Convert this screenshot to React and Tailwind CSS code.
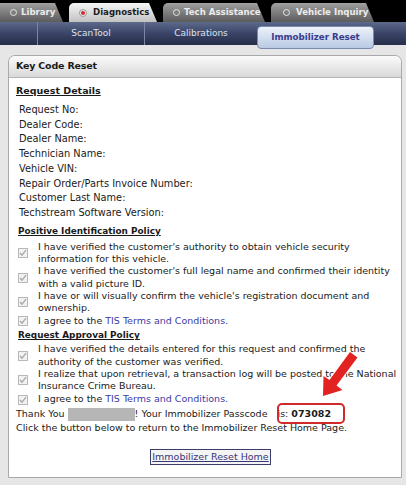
import React from "react";

function Tab({ label, active, className }) {
  return (
    <div
      className={
        "h-[19px] rounded-tl-[5px] flex items-center gap-[4px] whitespace-nowrap text-[8.6px] font-bold [clip-path:polygon(0_0,calc(100%-8px)_0,100%_100%,0_100%)] " +
        (active
          ? "bg-gradient-to-b from-[#f6f6f6] to-[#c2c2c2] text-[#1e1e1e]"
          : "bg-gradient-to-b from-[#a0a0a0] to-[#5c5c5c] text-[#ececec]") +
        " " +
        className
      }
    >
      {active ? (
        <span className="w-[8px] h-[8px] rounded-full bg-[#ececec] border border-[#9a9a9a] flex items-center justify-center">
          <span className="w-[4px] h-[4px] rounded-full bg-[#d42a2a]" />
        </span>
      ) : (
        <span className="w-[7px] h-[7px] rounded-full border-[1.5px] border-[#e4e4e4]" />
      )}
      <span>{label}</span>
    </div>
  );
}

function Check() {
  return (
    <span className="w-[10px] h-[10px] border border-[#b8b8b8] bg-[#f2f2f2] flex items-center justify-center shrink-0">
      <svg width="8" height="8" viewBox="0 0 8 8">
        <path d="M1 4 L3 6.2 L7 1.2" fill="none" stroke="#a8a8a8" strokeWidth="1.3" />
      </svg>
    </span>
  );
}

function Item({ children, single }) {
  return (
    <div className={"flex items-center " + (single ? "h-[14px]" : "")}>
      <div className="w-[20px] flex">
        <Check />
      </div>
      <div className="leading-[12.3px]">{children}</div>
    </div>
  );
}

const Link = ({ children }) => <span className="text-[#3a3aa8]">{children}</span>;

export default function App() {
  return (
    <div className="w-[406px] h-[485px] overflow-hidden bg-[#d6d6d6] relative font-['DejaVu_Sans',Verdana,sans-serif] text-[#1a1a1a]">
      {/* top tabs */}
      <div className="h-[22px] bg-black flex items-end gap-[6px] ml-[-10px]">
        <Tab label="Library" className="w-[73px] pl-[20px]" />
        <Tab label="Diagnostics" active className="w-[88px] pl-[10px] gap-[6px]" />
        <Tab label="Tech Assistance" className="w-[102px] pl-[10px]" />
        <Tab label="Vehicle Inquiry" className="w-[103px] pl-[12px] gap-[6px]" />
      </div>
      {/* sub nav */}
      <div className="h-[23px] bg-gradient-to-b from-[#5d6a8c] via-[#3a4466] to-[#262e48] flex items-stretch text-[9px] text-[#dfe3ee]">
        <div className="w-[38px] border-r border-[#7d87a3]" />
        <div className="w-[107px] border-r border-[#7d87a3] flex items-center justify-center">ScanTool</div>
        <div className="w-[112px] flex items-center justify-center">Calibrations</div>
        <div className="relative z-10 mt-[4px] h-[23px] w-[117px] rounded-[4px] border border-[#7a8bb0] bg-gradient-to-b from-[#eef3fb] to-[#b9c9e3] flex items-center justify-center font-bold text-[8.7px] text-[#3b3b8c]">
          Immobilizer Reset
        </div>
      </div>
      {/* content */}
      <div className="bg-[#e6e6e6] pl-[8px] pr-[4px] pt-[10px] h-[440px]">
        <div className="relative rounded-t-[7px] border border-[#a9a9a9] bg-white">
          <div className="h-[22px] rounded-t-[7px] bg-gradient-to-b from-[#fbfbfb] to-[#d9d9d9] border-b border-[#b5b5b5] flex items-center pl-[7px] font-bold text-[9.5px] tracking-[-0.2px]">
            Key Code Reset
          </div>
          <div className="pl-[7px] pt-[6px] pb-[12px] text-[9.5px]">
            <div className="font-bold underline text-[9.5px] leading-[14px]">Request Details</div>
            <div className="pl-[3px] pt-[5px] leading-[14.7px] text-[9.8px]">
              <div>Request No:</div>
              <div>Dealer Code:</div>
              <div>Dealer Name:</div>
              <div>Technician Name:</div>
              <div>Vehicle VIN:</div>
              <div>Repair Order/Parts Invoice Number:</div>
              <div>Customer Last Name:</div>
              <div>Techstream Software Version:</div>
            </div>
            <div className="pl-[2px]">
              <div className="font-bold underline text-[8.9px] leading-[14px] mt-[3px] mb-[3px]">Positive Identification Policy</div>
              <Item>
                I have verified the customer's authority to obtain vehicle security<br />
                information for this vehicle.
              </Item>
              <Item>
                I have verified the customer's full legal name and confirmed their identity<br />
                with a valid picture ID.
              </Item>
              <Item>
                I have or will visually confirm the vehicle's registration document and<br />
                ownership.
              </Item>
              <Item single>
                I agree to the <Link>TIS Terms and Conditions.</Link>
              </Item>
              <div className="font-bold underline text-[8.9px] leading-[14px] mb-[1px]">Request Approval Policy</div>
              <Item>
                I have verified the details entered for this request and confirmed the<br />
                authority of the customer was verified.
              </Item>
              <Item>
                I realize that upon retrieval, a transaction log will be posted to the National<br />
                Insurance Crime Bureau.
              </Item>
              <Item single>
                I agree to the <Link>TIS Terms and Conditions.</Link>
              </Item>
            </div>
            <div className="leading-[14.7px]">
              <div>
                Thank You{" "}
                <span className="inline-block w-[67px] h-[13px] bg-[#b6b6b6] align-middle" />! Your Immobilizer Passcode{" "}
                <span className="relative ml-[7px]">
                  is: <b>073082</b>
                  <span className="absolute left-[-1px] right-[-14px] top-[-5px] bottom-[-5px] rounded-[5px] border-[2.5px] border-[#d22a2a]" />
                </span>
              </div>
              <div>Click the button below to return to the Immobilizer Reset Home Page.</div>
            </div>
            <div className="flex justify-center mt-[13px] pl-[4px]">
              <span className="border border-[#3c3c6a] bg-[#f4f4f4] px-[1px] leading-[14px] text-[#36367a] underline">Immobilizer Reset Home</span>
            </div>
          </div>
          <svg className="absolute left-0 top-0 pointer-events-none" width="394" height="430" viewBox="8 55 394 430">
            <polygon
              points="349,351 328.5,379 322.5,375 322,395 341.5,389 335.5,384.5 356.5,356.5"
              fill="#e32222"
              stroke="#ffffff"
              strokeWidth="2"
              strokeLinejoin="round"
              paintOrder="stroke"
            />
          </svg>
        </div>
      </div>
    </div>
  );
}
